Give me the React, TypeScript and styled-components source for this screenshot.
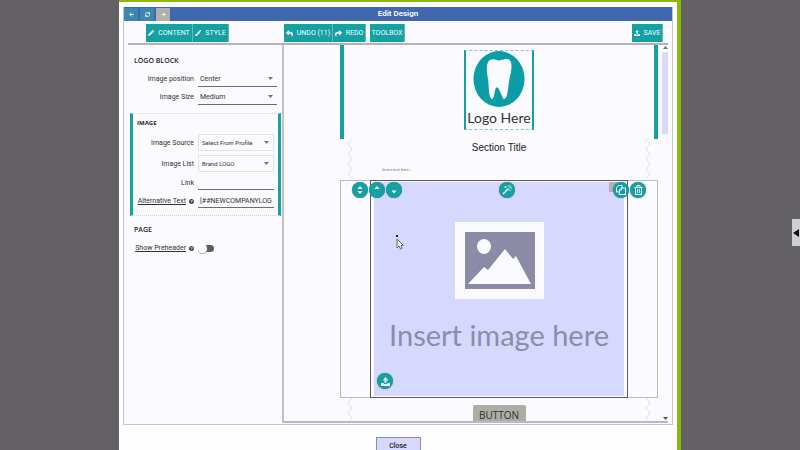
import React from "react";
import styled, { createGlobalStyle } from "styled-components";
import {
  FaArrowLeft,
  FaArrowRight,
  FaPaintBrush,
  FaPencilAlt,
  FaQuestionCircle,
  FaReply,
  FaShare,
  FaSync,
} from "react-icons/fa";

const teal = "#16a0a3";
const paper = "#fbfaff";
const ink = "#33322f";

const GlobalStyle = createGlobalStyle`
  * { box-sizing: border-box; }
  body { margin: 0; background: #636163; font-family: Roboto, "Open Sans", sans-serif; color: ${ink}; }
  button, input, select { font-family: inherit; color: inherit; margin: 0; }
`;

const Stage = styled.main`
  display: flex;
  height: 100vh;
  padding: 0 119px;
  overflow: hidden;
`;

const Modal = styled.section`
  flex: 1;
  min-width: 0;
  display: flex;
  flex-direction: column;
  padding: 5px 4px 0;
  background: #fdfdff;
  border-top: 2px solid #8bb80b;
  border-right: 4px solid #8bb80b;
`;

const Frame = styled.div`
  flex: 1;
  min-height: 0;
  display: flex;
  flex-direction: column;
  background: ${paper};
  border: 1px solid #b9c4df;
  border-top: 0;
`;

const TitleBar = styled.header`
  display: grid;
  grid-template-columns: 1fr auto 1fr;
  align-items: center;
  height: 14px;
  background: #4168ad;
`;

const NavGroup = styled.nav`
  display: flex;
  gap: 2px;
`;

const NavButton = styled.button<{ $muted?: boolean }>`
  display: grid;
  place-items: center;
  width: 14px;
  height: 13px;
  padding: 0;
  border: 0;
  font-size: 5px;
  color: #e8f6fa;
  background: ${(p) => (p.$muted ? "#b1b0ab" : "#3d86ad")};
`;

const Title = styled.h1`
  margin: 0;
  font-size: 8px;
  line-height: 14px;
  font-weight: 600;
  color: #fff;
`;

const Toolbar = styled.div`
  display: grid;
  grid-template-columns: 156px 1fr auto;
  margin: 0 4px;
  padding: 3px 5px 1px 0;
  border-bottom: 2px solid #b4b3b8;
`;

const ToolGroup = styled.div<{ $indent?: boolean }>`
  display: flex;
  padding-left: ${(p) => (p.$indent ? "18px" : "0")};
`;

const ToolButton = styled.button<{ $width: number; $apart?: boolean }>`
  display: flex;
  align-items: center;
  justify-content: center;
  gap: 4px;
  width: ${(p) => p.$width}px;
  height: 18px;
  margin-left: ${(p) => (p.$apart ? "4px" : "0")};
  padding: 0;
  border: 0;
  border-right: 1px solid #5fbdc0;
  background: ${teal};
  color: #f2ffff;
  font-size: 7px;
  line-height: 18px;
  white-space: nowrap;
`;

const Body = styled.div`
  flex: 1;
  min-height: 0;
  display: flex;
  padding: 0 4px 1px 0;
`;

const SidePanel = styled.aside`
  width: 158px;
  padding: 10px 1px 0 6px;
`;

const Group = styled.fieldset<{ $boxed?: boolean }>`
  display: flex;
  flex-direction: column;
  min-width: 0;
  margin: 0;
  border: 0;
  padding: ${(p) => (p.$boxed ? "3px 4px 5px 0" : "0 4px 7px 3px")};
  ${(p) =>
    p.$boxed &&
    `border: 1px dotted #c9cde6; border-left: 3px solid ${teal}; border-right: 3px solid ${teal}; margin-bottom: 8px;`}
`;

const GroupTitle = styled.h2<{ $small?: boolean }>`
  margin: 0 0 3px;
  padding-left: ${(p) => (p.$small ? "4px" : "1px")};
  font-family: "Open Sans", sans-serif;
  font-size: ${(p) => (p.$small ? "6px" : "7px")};
  line-height: 12px;
  font-weight: ${(p) => (p.$small ? 700 : 600)};
  color: #1f1e1b;
`;

const Field = styled.div<{ $tall?: boolean }>`
  display: grid;
  grid-template-columns: 61px 1fr;
  column-gap: 4px;
  align-items: center;
  height: ${(p) => (p.$tall ? "21px" : "18px")};
`;

const Label = styled.label<{ $hint?: boolean }>`
  display: flex;
  align-items: center;
  justify-content: flex-end;
  gap: 3px;
  font-size: 7px;
  line-height: 10px;
  white-space: nowrap;
  span { text-decoration: ${(p) => (p.$hint ? "underline" : "none")}; }
  svg { font-size: 5px; flex: none; }
`;

const SelectBox = styled.div<{ $outlined?: boolean }>`
  display: grid;
  grid-template-columns: 1fr 14px;
  align-items: center;
  height: ${(p) => (p.$outlined ? "17px" : "15px")};
  border: ${(p) => (p.$outlined ? "1px solid #e3e3ef" : "0")};
  border-bottom: 1px solid ${(p) => (p.$outlined ? "#e3e3ef" : "#6d6c6a")};
  select, svg { grid-row: 1; }
  select {
    grid-column: 1 / 3;
    padding-left: ${(p) => (p.$outlined ? "3px" : "2px")};
    font-size: ${(p) => (p.$outlined ? "6px" : "7px")};
  }
  svg { grid-column: 2; justify-self: center; pointer-events: none; }
`;

const Select = styled.select`
  appearance: none;
  width: 100%;
  height: 13px;
  border: 0;
  background: transparent;
  line-height: 12px;
`;

const TextInput = styled.input`
  width: 100%;
  height: 14px;
  padding: 0 2px;
  border: 0;
  border-bottom: 1px solid #6d6c6a;
  background: transparent;
  font-size: 7px;
`;

const Switch = styled.input`
  appearance: none;
  display: flex;
  align-items: center;
  width: 15px;
  height: 7px;
  margin: 0 0 0 1px;
  border-radius: 4px;
  background: #5f5d57;
  &::before {
    content: "";
    width: 9px;
    height: 9px;
    margin-left: -1px;
    flex: none;
    border-radius: 50%;
    background: #fff;
    box-shadow: 0 1px 1px #aaa;
  }
`;

const Workspace = styled.div`
  flex: 1;
  min-width: 0;
  display: flex;
  overflow: hidden;
  border-left: 2px solid #c2c1c9;
  border-bottom: 2px solid #b9b8c4;
`;

const Email = styled.article`
  flex: 1;
  min-width: 0;
  padding: 0 4px 0 56px;
  overflow: hidden;
`;

const ScrollTrack = styled.div`
  display: flex;
  flex-direction: column;
  align-items: center;
  justify-content: space-between;
  width: 6px;
  padding: 1px 0;
`;

const ScrollThumb = styled.div`
  width: 6px;
  height: 82px;
  margin: 3px 0 auto;
  background: #d7d9fe;
`;

const Masthead = styled.div`
  display: flex;
  justify-content: center;
  height: 94px;
  padding-top: 5px;
  border: solid ${teal};
  border-width: 0 4px;
`;

const LogoBlock = styled.figure`
  display: flex;
  flex-direction: column;
  align-items: center;
  width: 70px;
  height: 80px;
  margin: 0;
  border: 1px dashed #7fc6d2;
  border-left: 2px solid ${teal};
  border-right: 2px solid ${teal};
`;

const LogoText = styled.figcaption`
  font-family: Lato, sans-serif;
  font-size: 14px;
  line-height: 22px;
  white-space: nowrap;
`;

const TornStrip = styled.div<{ $short?: boolean }>`
  display: flex;
  justify-content: space-between;
  padding: 0 7px;
  height: ${(p) => (p.$short ? "24px" : "41px")};
  overflow: hidden;
`;

const StripContent = styled.div`
  flex: 1;
  display: flex;
  flex-direction: column;
  align-items: center;
`;

const SectionTitle = styled.h3`
  margin: 0;
  padding-top: 3px;
  font: 400 10px/12px "Liberation Sans", sans-serif;
  color: #22211e;
`;

const Placeholder = styled.p`
  align-self: flex-start;
  margin: 12px 0 0 29px;
  font: italic 4px/8px "Liberation Sans", sans-serif;
  color: #6f6e72;
`;

const BlockRow = styled.div`
  position: relative;
  padding: 0 29px;
  border: 1px solid #bdbcbd;
`;

const ImageBlock = styled.div`
  padding: 1px 3px;
  margin: -1px 0;
  border: 1px solid #5d5c58;
`;

const ImageDrop = styled.div`
  display: flex;
  flex-direction: column;
  align-items: center;
  height: 214px;
  padding-top: 40px;
  background: #d6d8fe;
`;

const DropText = styled.p`
  margin: 12px 0 0;
  font-family: Lato, sans-serif;
  font-size: 29px;
  line-height: 48px;
  white-space: nowrap;
  color: #8d8ca9;
`;

const Tools = styled.div<{ $side: "left" | "center" | "right" | "bottom" }>`
  position: absolute;
  display: flex;
  gap: 1px;
  ${(p) =>
    ({
      left: "top: 1px; left: 11px;",
      center: "top: 1px; left: 50%;",
      right: "top: 1px; right: 11px;",
      bottom: "bottom: 8px; left: 36px;",
    })[p.$side]}
`;

const RoundButton = styled.button`
  display: grid;
  place-items: center;
  width: 16px;
  height: 16px;
  padding: 0;
  border: 0;
  border-radius: 50%;
  background: ${teal};
  color: #fff;
  box-shadow: 0 0 1px #57777c;
`;

const Chip = styled.span`
  position: absolute;
  top: 1px;
  right: 38px;
  width: 10px;
  height: 10px;
  background: #b2b2b4;
`;

const EmailButton = styled.button`
  width: 53px;
  height: 17px;
  margin-top: 7px;
  padding: 3px 0 0;
  border: 0;
  border-radius: 2px 2px 0 0;
  background: #adada6;
  font: 400 10px/14px "Open Sans", sans-serif;
  color: #33322c;
`;

const Footer = styled.footer`
  display: flex;
  justify-content: center;
  align-items: flex-start;
  height: 25px;
  padding-top: 12px;
`;

const CloseButton = styled.button`
  flex: none;
  width: 45px;
  height: 18px;
  padding: 0;
  border: 1px solid #8f8fa0;
  background: #d6d8fe;
  font-size: 7px;
  font-weight: 500;
  line-height: 16px;
  color: #222;
`;

const Drawer = styled.button`
  position: absolute;
  top: 219px;
  right: 0;
  display: grid;
  place-items: center;
  width: 8px;
  height: 27px;
  padding: 0;
  border: 0;
  background: #cfced2;
`;

const Pointer = styled.svg`
  position: absolute;
  top: 54px;
  left: 54px;
`;

const Caret = ({ up = false, dark = false }: { up?: boolean; dark?: boolean }) => (
  <svg width="5" height="3" viewBox="0 0 5 3" aria-hidden="true">
    <path d={up ? "M0 3L2.500 0L5 3Z" : "M0 0L2.500 3L5 0Z"} fill={dark ? "#55545a" : "#73727a"} />
  </svg>
);

const ZigZag = ({ flip = false }: { flip?: boolean }) => (
  <svg width="6" height="41" viewBox="0 0 6 41" fill="none" aria-hidden="true">
    <path
      d={flip ? "M1 0L5 5L1 10L5 15L1 20L5 25L1 30L5 35L1 40" : "M5 0L1 5L5 10L1 15L5 20L1 25L5 30L1 35L5 40"}
      stroke="#e0dfe8"
    />
  </svg>
);

const Tooth = () => (
  <svg width="52" height="57" viewBox="0 0 52 57" aria-hidden="true">
    <ellipse cx="26" cy="28.500" rx="26" ry="28.500" fill="#0a9da5" />
    <path
      fill={paper}
      d="M14 14C15 8 20 8 23 9C25 10 27 10 29 9C34 7 38 8 38.500 13C39.500 20 37 25 36 32C35 39 35 48 31 49C28 46 27 38 24 37C21 37 22 48 19 49C15 47 16 37 15 30C14 24 13 19 14 14Z"
    />
  </svg>
);

const Picture = () => (
  <svg width="89" height="77" viewBox="0 0 89 77" aria-hidden="true">
    <path fill={paper} d="M0 0H89V77H0Z" />
    <path fill="#8b8aa7" d="M10 10H80V67H10Z" />
    <ellipse cx="29" cy="24.500" rx="7" ry="7.500" fill={paper} />
    <path fill={paper} d="M13 62L29 45L33 48L50 27L58 37L61 34L76 62Z" />
  </svg>
);

const Arrows = ({ kind }: { kind: "both" | "up" | "down" }) => (
  <svg width="10" height="12" viewBox="0 0 10 12" fill="#fff" aria-hidden="true">
    {kind === "both" && <path d="M5 2L7.500 5H2.500ZM2.500 7H7.500L5 10Z" />}
    {kind === "up" && <path d="M5 2L7.500 5H2.500Z" />}
    {kind === "down" && <path d="M2.500 6.500H7.500L5 9.500Z" />}
  </svg>
);

const Upload = ({ size }: { size: number }) => (
  <svg width={size} height={size} viewBox="0 0 10 10" fill="currentColor" aria-hidden="true">
    <path d="M5 0L8 3.500H6V6.500H4V3.500H2ZM0 7H3L4 8H6L7 7H10V10H0Z" />
  </svg>
);

const Wand = () => (
  <svg width="10" height="10" viewBox="0 0 10 10" fill="none" stroke="#fff" aria-hidden="true">
    <path d="M1 9L6.500 3.500" strokeWidth="1.500" />
    <path d="M8 0V1.500M8 4.500V6M6 0.500L6.500 1.500M9 3H10M3.500 1V3M2.500 2H4.500" strokeWidth="0.900" />
    <circle cx="8" cy="2.500" r="0.700" fill="#fff" stroke="none" />
  </svg>
);

const Pages = () => (
  <svg width="10" height="10" viewBox="0 0 10 10" fill={teal} stroke="#fff" aria-hidden="true">
    <path d="M2.500 0.500H6V7H0.500V2.500Z" />
    <path d="M5.500 3H9.500V9.500H3.500V5Z" />
    <path d="M5.500 3V5H3.500" />
  </svg>
);

const Bin = () => (
  <svg width="9" height="10" viewBox="0 0 9 10" fill="none" stroke="#fff" aria-hidden="true">
    <path d="M0.500 2.500H8.500M3 2V0.500H6V2M1.500 3V9.500H7.500V3" />
    <path d="M3.500 4V8M5.500 4V8" strokeWidth="0.800" />
  </svg>
);

type FieldProps = { id: string; label: string; tall?: boolean; hint?: boolean; children: React.ReactNode };

const FormField = ({ id, label, tall, hint, children }: FieldProps) => (
  <Field $tall={tall}>
    <Label htmlFor={id} $hint={hint}>
      <span>{label}</span>
      {hint && <FaQuestionCircle />}
    </Label>
    {children}
  </Field>
);

const Choice = ({ id, value, outlined }: { id: string; value: string; outlined?: boolean }) => (
  <SelectBox $outlined={outlined}>
    <Select id={id} defaultValue={value}>
      <option>{value}</option>
    </Select>
    <Caret />
  </SelectBox>
);

export default function App() {
  return (
    <>
      <GlobalStyle />
      <Stage>
        <Modal>
          <Frame>
            <TitleBar>
              <NavGroup>
                <NavButton aria-label="Back"><FaArrowLeft /></NavButton>
                <NavButton aria-label="Refresh"><FaSync /></NavButton>
                <NavButton aria-label="Forward" $muted><FaArrowRight /></NavButton>
              </NavGroup>
              <Title>Edit Design</Title>
            </TitleBar>
            <Toolbar>
              <ToolGroup $indent>
                <ToolButton $width={47}><FaPencilAlt size={6} />CONTENT</ToolButton>
                <ToolButton $width={36}><FaPaintBrush size={6} />STYLE</ToolButton>
              </ToolGroup>
              <ToolGroup>
                <ToolButton $width={49}><FaReply size={7} />UNDO (11)</ToolButton>
                <ToolButton $width={33}><FaShare size={7} />REDO</ToolButton>
                <ToolButton $width={35} $apart>TOOLBOX</ToolButton>
              </ToolGroup>
              <ToolButton $width={31}><Upload size={6} />SAVE</ToolButton>
            </Toolbar>
            <Body>
              <SidePanel>
                <Group>
                  <GroupTitle>LOGO BLOCK</GroupTitle>
                  <FormField id="position" label="Image position"><Choice id="position" value="Center" /></FormField>
                  <FormField id="size" label="Image Size"><Choice id="size" value="Medium" /></FormField>
                </Group>
                <Group $boxed>
                  <GroupTitle $small>IMAGE</GroupTitle>
                  <FormField id="source" label="Image Source" tall>
                    <Choice id="source" value="Select From Profile" outlined />
                  </FormField>
                  <FormField id="list" label="Image List" tall>
                    <Choice id="list" value="Brand LOGO" outlined />
                  </FormField>
                  <FormField id="link" label="Link"><TextInput id="link" /></FormField>
                  <FormField id="alt" label="Alternative Text" hint>
                    <TextInput id="alt" defaultValue="[##NEWCOMPANYLOGO##]" />
                  </FormField>
                </Group>
                <Group>
                  <GroupTitle>PAGE</GroupTitle>
                  <FormField id="preheader" label="Show Preheader" hint>
                    <Switch id="preheader" type="checkbox" role="switch" />
                  </FormField>
                </Group>
              </SidePanel>
              <Workspace>
                <Email>
                  <Masthead>
                    <LogoBlock>
                      <Tooth />
                      <LogoText>Logo Here</LogoText>
                    </LogoBlock>
                  </Masthead>
                  <TornStrip>
                    <ZigZag />
                    <StripContent>
                      <SectionTitle>Section Title</SectionTitle>
                      <Placeholder>Insert text here...</Placeholder>
                    </StripContent>
                    <ZigZag flip />
                  </TornStrip>
                  <BlockRow>
                    <ImageBlock>
                      <ImageDrop>
                        <Picture />
                        <DropText>Insert image here</DropText>
                      </ImageDrop>
                    </ImageBlock>
                    <Tools $side="left">
                      <RoundButton aria-label="Move"><Arrows kind="both" /></RoundButton>
                      <RoundButton aria-label="Move up"><Arrows kind="up" /></RoundButton>
                      <RoundButton aria-label="Move down"><Arrows kind="down" /></RoundButton>
                    </Tools>
                    <Tools $side="center">
                      <RoundButton aria-label="Restyle"><Wand /></RoundButton>
                    </Tools>
                    <Chip />
                    <Tools $side="right">
                      <RoundButton aria-label="Duplicate"><Pages /></RoundButton>
                      <RoundButton aria-label="Delete"><Bin /></RoundButton>
                    </Tools>
                    <Tools $side="bottom">
                      <RoundButton aria-label="Upload"><Upload size={9} /></RoundButton>
                    </Tools>
                    <Pointer width="10" height="15" viewBox="0 0 10 15" aria-hidden="true">
                      <path d="M1 0H3V2H1Z" fill="#222" />
                      <path d="M2 4V13L4 11L5.500 14L7 13.500L6 10.500H8.500Z" fill="#fff" stroke="#66657a" />
                    </Pointer>
                  </BlockRow>
                  <TornStrip $short>
                    <ZigZag />
                    <StripContent>
                      <EmailButton>BUTTON</EmailButton>
                    </StripContent>
                    <ZigZag flip />
                  </TornStrip>
                </Email>
                <ScrollTrack>
                  <Caret up />
                  <ScrollThumb />
                  <Caret dark />
                </ScrollTrack>
              </Workspace>
            </Body>
          </Frame>
          <Footer>
            <CloseButton>Close</CloseButton>
          </Footer>
        </Modal>
        <Drawer aria-label="Open drawer">
          <svg width="6" height="8" viewBox="0 0 6 8" aria-hidden="true">
            <path d="M0 4L6 0V8Z" fill="#111" />
          </svg>
        </Drawer>
      </Stage>
    </>
  );
}
